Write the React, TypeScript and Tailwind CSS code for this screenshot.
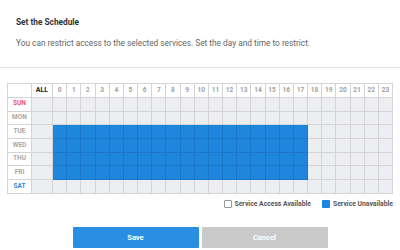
import React from "react";

const days = [
  { label: "SUN", color: "text-[#f0506e]" },
  { label: "MON", color: "text-[#a8a8a8]" },
  { label: "TUE", color: "text-[#a8a8a8]" },
  { label: "WED", color: "text-[#a8a8a8]" },
  { label: "THU", color: "text-[#a8a8a8]" },
  { label: "FRI", color: "text-[#a8a8a8]" },
  { label: "SAT", color: "text-[#2f86d6]" },
];

const hours = Array.from({ length: 24 }, (_, i) => i);

function isBlocked(d: number, h: number) {
  return d >= 2 && d <= 5 && h <= 17;
}

export default function App() {
  return (
    <div
      className="w-[400px] h-[250px] bg-white overflow-hidden relative"
      style={{ fontFamily: "Roboto, 'Liberation Sans', sans-serif" }}
    >
      <div className="px-4 pt-[17px] h-[68px] border-b border-[#e2e2e2]">
        <div className="text-[8.3px] font-bold text-[#333] leading-[10px]">Set the Schedule</div>
        <div className="mt-[11px] text-[8.3px] text-[#666] leading-[10px]">
          You can restrict access to the selected services. Set the day and time to restrict.
        </div>
      </div>
      <div className="pt-[15px] pl-[7px]">
        <div className="w-[386px] border-l border-t border-[#d4d4d4] grid grid-cols-[24px_21px_repeat(24,minmax(0,1fr))]">
          <div className="h-[14px] bg-white border-r border-b border-[#d4d4d4]" />
          <div className="h-[14px] bg-white border-r border-b border-[#d4d4d4] flex items-center justify-center text-[7px] font-bold text-[#222]">
            ALL
          </div>
          {hours.map((h) => (
            <div
              key={h}
              className="h-[14px] bg-white border-r border-b border-[#d4d4d4] flex items-center justify-center text-[6.5px] font-bold text-[#a0a0a0]"
            >
              {h}
            </div>
          ))}
          {days.map((d, di) => (
            <React.Fragment key={d.label}>
              <div
                className={`h-[13.7px] bg-white border-r border-b border-[#d4d4d4] flex items-center justify-center text-[6.5px] font-bold ${d.color}`}
              >
                {d.label}
              </div>
              <div className="h-[13.7px] bg-[#eceef1] border-r border-b border-[#d4d4d4]" />
              {hours.map((h) =>
                isBlocked(di, h) ? (
                  <div
                    key={h}
                    className="h-[13.7px] bg-[#1e86dc] border-r border-b border-[#1c76c8]"
                  />
                ) : (
                  <div
                    key={h}
                    className="h-[13.7px] bg-[#eceef1] border-r border-b border-[#d4d4d4]"
                  />
                )
              )}
            </React.Fragment>
          ))}
        </div>
      </div>
      <div className="flex justify-end items-center pr-[7px] mt-[5px] text-[6.8px] font-bold text-[#555]">
        <div className="w-[8px] h-[8px] border border-[#999] rounded-[1px] bg-white" />
        <span className="ml-[3px]">Service Access Available</span>
        <div className="ml-[11px] w-[8px] h-[8px] bg-[#1e86dc] rounded-[1px]" />
        <span className="ml-[3px]">Service Unavailable</span>
      </div>
      <div className="flex justify-center gap-[3px] mt-[18px]">
        <button className="w-[126px] h-[21px] bg-[#2a8fe2] text-white text-[7.5px] font-bold rounded-[1px]">
          Save
        </button>
        <button className="w-[126px] h-[21px] bg-[#c9c9c9] text-white text-[7.5px] font-bold rounded-[1px]">
          Cancel
        </button>
      </div>
    </div>
  );
}
